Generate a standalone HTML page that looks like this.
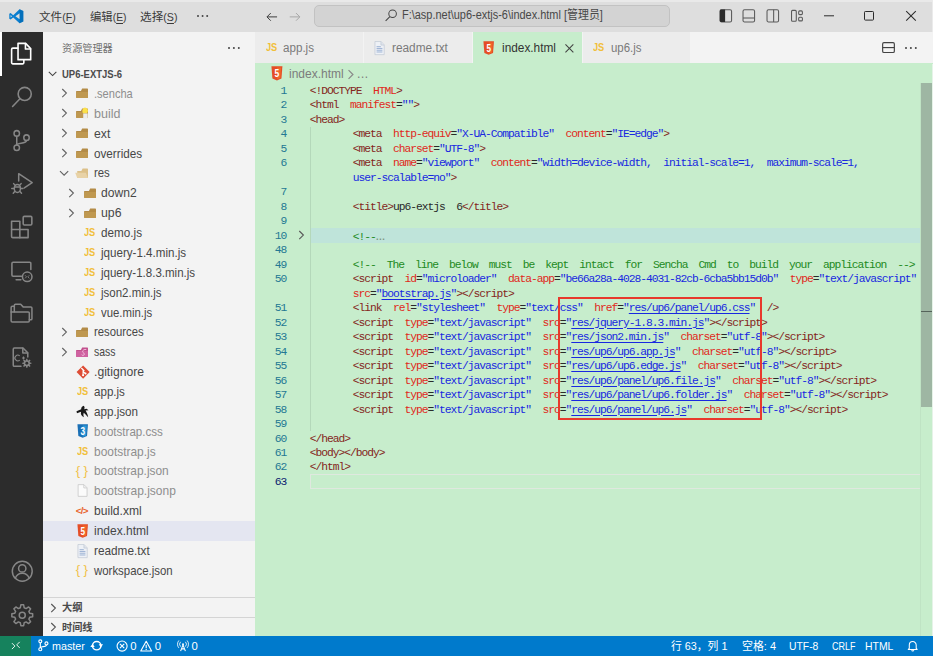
<!DOCTYPE html><html lang="zh-CN"><head><meta charset="utf-8"><title>index.html - up6-extjs-6</title><style>

html,body{margin:0;padding:0}
body{width:933px;height:656px;overflow:hidden;position:relative;background:#c7edcc;font-family:"Liberation Sans","Noto Sans CJK SC",sans-serif;font-size:11.7px;color:#3b3b3b}
.abs,.abs>*{position:absolute}
div,span,svg{position:absolute;white-space:pre}
.m{display:inline-block;transform-origin:0 50%}
#title{left:0;top:0;width:933px;height:32px;background:#dedede}
#titletop{left:0;top:0;width:933px;height:1.7px;background:#e9e9e9}
#act{left:0;top:32px;width:43px;height:605px;background:#2c2c2c}
#actind{left:0;top:32px;width:1.8px;height:43.6px;background:#ffffff}
#side{left:43px;top:32px;width:212px;height:605px;background:#f3f3f3}
#tabs{left:255px;top:32px;width:678px;height:31.3px;background:#f3f3f3}
.tab{top:32px;height:31.3px;background:#ececec}
#status{left:0;top:636.3px;width:933px;height:20px;background:#007acc;color:#fff}
#remote{left:0;top:636.3px;width:31px;height:20px;background:#16825d}
#search{left:314.2px;top:4.9px;width:355.6px;height:22px;box-sizing:border-box;border:1px solid #c2c2c2;border-radius:5px;background:#d3d3d3}
.code{font-family:"Liberation Mono","Noto Sans CJK SC",monospace;font-size:11.3px;letter-spacing:-1.03px;word-spacing:5.75px;line-height:14.48px;height:14.48px;color:#000}
.ln{font-family:"Liberation Mono","Noto Sans CJK SC",monospace;font-size:11.3px;letter-spacing:-1.03px;line-height:14.48px;color:#237893;width:30px;text-align:right;left:256.2px}
.t{color:#84261c}.a{color:#e02820}.v{color:#1828e0}.c{color:#228a22}.k{color:#2a2a2a}
.t,.a,.v,.c,.k,.u{position:static}
.u{text-decoration:underline;text-underline-offset:1.5px}
u{position:static;text-underline-offset:1.5px}
.st{top:636px;line-height:20px;height:20px;font-size:11.3px;color:#fff}

</style></head><body>
<div id="title"></div><div id="titletop"></div><div style="left:932px;top:0;width:1px;height:32px;background:#ebebeb"></div>
<svg style="left:8.80px;top:9.30px;overflow:visible" width="14.60" height="14.60" viewBox="0 0 100 100" ><path fill-rule="evenodd" fill="#0a7fd0" d="M72 2 L98 14 V86 L72 98 L29 58 L11 72 L2 67 V33 L11 28 L29 42 Z M73 29 L44 50 L73 71 Z M11 41 V59 L21 50 Z"/><path fill="#0065a9" d="M72 2 L98 14 V86 L72 98 V71 L73 71 V29 L72 29 Z" opacity=".55"/></svg>
<div style="left:38.6px;top:9.4px;font-size:11.6px;color:#3a3a3a;line-height:15px" ><span class="m" id="m1" style="transform:scaleX(1.0014);position:static;line-height:15px">文件<span class="k" style="font-size:10.6px;color:inherit">(<u>F</u>)</span></span></div>
<div style="left:89.5px;top:9.4px;font-size:11.6px;color:#3a3a3a;line-height:15px" ><span class="m" id="m2" style="transform:scaleX(0.9774);position:static;line-height:15px">编辑<span class="k" style="font-size:10.6px;color:inherit">(<u>E</u>)</span></span></div>
<div style="left:140.2px;top:9.4px;font-size:11.6px;color:#3a3a3a;line-height:15px" ><span class="m" id="m3" style="transform:scaleX(1.0042);position:static;line-height:15px">选择<span class="k" style="font-size:10.6px;color:inherit">(<u>S</u>)</span></span></div>
<svg style="left:196.50px;top:15.30px;overflow:visible" width="11.20" height="2.00" viewBox="0 0 11.2 2.0" ><circle cx="1.00" cy="1.00" r="1.0" fill="#444"/><circle cx="5.60" cy="1.00" r="1.0" fill="#444"/><circle cx="10.20" cy="1.00" r="1.0" fill="#444"/></svg>
<svg style="left:266.40px;top:10.60px;overflow:visible" width="11.80" height="11.80" viewBox="0 0 16 16" ><path d="M15 8H1.5M6.5 2.8L1.3 8l5.2 5.2" fill="none" stroke="#3c3c3c" stroke-width="1.35"/></svg>
<svg style="left:289.40px;top:10.60px;overflow:visible" width="11.80" height="11.80" viewBox="0 0 16 16" ><path d="M1 8h13.5M9.5 2.8L14.7 8l-5.2 5.2" fill="none" stroke="#a6a6a6" stroke-width="1.35"/></svg>
<div id="search"></div>
<svg style="left:385.40px;top:8.90px;overflow:visible" width="12.40" height="12.40" viewBox="0 0 16 16" ><circle cx="9.8" cy="6.2" r="4.9" fill="none" stroke="#444" stroke-width="1.3"/><path d="M6.3 9.7L0.8 15.2" stroke="#444" stroke-width="1.4"/></svg>
<div style="left:402px;top:8.3px;font-size:12.3px;color:#484848;line-height:15px"><span class="m" id="tt" style="transform:scaleX(0.8908);position:static;line-height:15px">F:\asp.net\up6-extjs-6\index.html [管理员]</span></div>
<svg style="left:718.70px;top:9.20px;overflow:visible" width="13.60" height="13.60" viewBox="0 0 16 16" ><rect x="1.2" y="0.8" width="13.6" height="14.4" rx="1.8" fill="none" stroke="#5a5a5a" stroke-width="1.25"/><path d="M1 2.200a1.600 1.600 0 0 1 1.600-1.600H7.200V15.400H2.600a1.600 1.600 0 0 1-1.600-1.600z" fill="#2b2b2b"/></svg>
<svg style="left:742.20px;top:9.20px;overflow:visible" width="13.60" height="13.60" viewBox="0 0 16 16" ><rect x="1.2" y="0.8" width="13.6" height="14.4" rx="1.8" fill="none" stroke="#5a5a5a" stroke-width="1.25"/><path d="M1.200 10.600H14.800" stroke="#5a5a5a" stroke-width="1.25"/></svg>
<svg style="left:765.60px;top:9.20px;overflow:visible" width="13.60" height="13.60" viewBox="0 0 16 16" ><rect x="1.2" y="0.8" width="13.6" height="14.4" rx="1.8" fill="none" stroke="#5a5a5a" stroke-width="1.25"/><path d="M9 0.800V15.200" stroke="#5a5a5a" stroke-width="1.25"/></svg>
<svg style="left:789.60px;top:9.20px;overflow:visible" width="13.60" height="13.60" viewBox="0 0 16 16" ><rect x="1.800" y="1.600" width="5.600" height="12.800" rx="1.200" fill="none" stroke="#5a5a5a" stroke-width="1.25"/><rect x="10.200" y="2.200" width="4.400" height="4.400" rx="1.200" fill="none" stroke="#5a5a5a" stroke-width="1.25"/><rect x="10.200" y="9.600" width="4.400" height="4.400" rx="1.200" fill="none" stroke="#5a5a5a" stroke-width="1.25"/></svg>
<svg style="left:823.60px;top:11.00px;overflow:visible" width="10.00" height="10.00" viewBox="0 0 10 10" ><path d="M0 4.8H10" stroke="#2b2b2b" stroke-width="1"/></svg>
<svg style="left:864.00px;top:11.00px;overflow:visible" width="10.00" height="10.00" viewBox="0 0 10 10" ><rect x="0.5" y="0.5" width="9" height="8.6" rx="0.8" fill="none" stroke="#2b2b2b" stroke-width="1"/></svg>
<svg style="left:905.50px;top:11.00px;overflow:visible" width="10.00" height="10.00" viewBox="0 0 10 10" ><path d="M0.2 0.2L9.8 9.6M9.8 0.2L0.2 9.6" stroke="#2b2b2b" stroke-width="1.05"/></svg>
<div id="act"></div><div id="actind"></div>
<svg style="left:9.26px;top:41.00px;overflow:visible" width="24.08" height="25.20" viewBox="0 0 24 24" preserveAspectRatio="none"><path d="M9 2.2h7.6l5 5V17.8H9z" fill="none" stroke="#ffffff" stroke-width="1.6" stroke-linejoin="round" stroke-linecap="round"/><path d="M16.4 2.4v5.2h5" fill="none" stroke="#ffffff" stroke-width="1.6" stroke-linejoin="round" stroke-linecap="round"/><path d="M8.8 6.8H3.8a1.2 1.2 0 0 0-1.2 1.2v12.6a1.2 1.2 0 0 0 1.2 1.2h9.8a1.2 1.2 0 0 0 1.2-1.2V18" fill="none" stroke="#ffffff" stroke-width="1.6" stroke-linejoin="round" stroke-linecap="round"/></svg>
<svg style="left:10.38px;top:85.28px;overflow:visible" width="23.85" height="23.85" viewBox="0 0 24 24" preserveAspectRatio="none"><circle cx="14.8" cy="9" r="6.6" fill="none" stroke="#868686" stroke-width="1.6" stroke-linejoin="round" stroke-linecap="round"/><path d="M10 13.8L2.6 21.6" fill="none" stroke="#868686" stroke-width="1.6" stroke-linejoin="round" stroke-linecap="round"/></svg>
<svg style="left:9.75px;top:129.11px;overflow:visible" width="22.50" height="23.18" viewBox="0 0 24 24" preserveAspectRatio="none"><circle cx="7.2" cy="4.6" r="2.9" fill="none" stroke="#868686" stroke-width="1.6" stroke-linejoin="round" stroke-linecap="round"/><circle cx="7.2" cy="19.400" r="2.9" fill="none" stroke="#868686" stroke-width="1.6" stroke-linejoin="round" stroke-linecap="round"/><circle cx="17.600" cy="9" r="2.9" fill="none" stroke="#868686" stroke-width="1.6" stroke-linejoin="round" stroke-linecap="round"/><path d="M7.2 7.5V16.5M17.600 11.900c0 3.800-10.400 1.800-10.400 4.600" fill="none" stroke="#868686" stroke-width="1.6" stroke-linejoin="round" stroke-linecap="round"/></svg>
<svg style="left:10.55px;top:172.05px;overflow:visible" width="22.50" height="22.50" viewBox="0 0 24 24" preserveAspectRatio="none"><path d="M8.2 9.5V1.8L22.6 11.4L14.2 17" fill="none" stroke="#868686" stroke-width="1.6" stroke-linejoin="round" stroke-linecap="round"/><ellipse cx="6.8" cy="17.6" rx="3.3" ry="4.2" fill="none" stroke="#868686" stroke-width="1.6" stroke-linejoin="round" stroke-linecap="round"/><path d="M4.4 14.2L2.8 12.4M9.2 14.2l1.6-1.8M3.5 17.6H0.8M10.1 17.6h2.7M4.2 20.6L2.4 22.6M9.4 20.6l1.8 2M3.8 16h6" fill="none" stroke="#868686" stroke-width="1.6" stroke-linejoin="round" stroke-linecap="round"/></svg>
<svg style="left:9.99px;top:215.29px;overflow:visible" width="23.62" height="23.62" viewBox="0 0 24 24" preserveAspectRatio="none"><path d="M1.6 6.4h8.4v8.4h8.4v8.2H2.8a1.2 1.2 0 0 1-1.2-1.2z" fill="none" stroke="#868686" stroke-width="1.6" stroke-linejoin="round" stroke-linecap="round"/><path d="M1.6 14.8h8.4V23" fill="none" stroke="#868686" stroke-width="1.6" stroke-linejoin="round" stroke-linecap="round"/><rect x="13.4" y="1.4" width="8.8" height="8.8" rx="1.2" fill="none" stroke="#868686" stroke-width="1.6" stroke-linejoin="round" stroke-linecap="round"/></svg>
<svg style="left:9.72px;top:259.72px;overflow:visible" width="22.95" height="22.95" viewBox="0 0 24 24" preserveAspectRatio="none"><path d="M12 17H3.2a1.2 1.2 0 0 1-1.2-1.2V3.6a1.2 1.2 0 0 1 1.2-1.2h17.4a1.2 1.2 0 0 1 1.2 1.2V10" fill="none" stroke="#868686" stroke-width="1.6" stroke-linejoin="round" stroke-linecap="round"/><path d="M6.4 20.6h5" fill="none" stroke="#868686" stroke-width="1.6" stroke-linejoin="round" stroke-linecap="round"/><circle cx="18" cy="17.6" r="5" fill="none" stroke="#868686" stroke-width="1.6" stroke-linejoin="round" stroke-linecap="round"/><path d="M15.8 16l1.5 1.6-1.5 1.6M20.2 16l-1.5 1.6 1.5 1.6" fill="none" stroke="#868686" stroke-width="0.9"/></svg>
<svg style="left:10.35px;top:302.45px;overflow:visible" width="22.50" height="22.50" viewBox="0 0 24 24" preserveAspectRatio="none"><path d="M4.6 10.4V3.600a1.200 1.200 0 0 1 1.200-1.200h5.600l2.600 2.800h8.200a1.200 1.200 0 0 1 1.200 1.200v11.400a1.200 1.200 0 0 1-1.200 1.200h-1.600" fill="none" stroke="#868686" stroke-width="1.6" stroke-linejoin="round" stroke-linecap="round"/><path d="M1.200 10.600V5.800a1.200 1.200 0 0 1 1.200-1.200h2" fill="none" stroke="#868686" stroke-width="1.6" stroke-linejoin="round" stroke-linecap="round"/><path d="M1.200 10.600h18.200a1.200 1.200 0 0 1 1.200 1.200v8.200a1.200 1.200 0 0 1-1.200 1.200H2.400a1.200 1.200 0 0 1-1.200-1.200z" fill="none" stroke="#868686" stroke-width="1.6" stroke-linejoin="round" stroke-linecap="round"/></svg>
<svg style="left:10.33px;top:346.05px;overflow:visible" width="22.95" height="22.50" viewBox="0 0 24 24" preserveAspectRatio="none"><path d="M11.5 21.6H4.6a1.2 1.2 0 0 1-1.2-1.2V3.4a1.2 1.2 0 0 1 1.2-1.2h9l5 5v4.6" fill="none" stroke="#868686" stroke-width="1.6" stroke-linejoin="round" stroke-linecap="round"/><path d="M13.4 2.4v5h5" fill="none" stroke="#868686" stroke-width="1.6" stroke-linejoin="round" stroke-linecap="round"/><path d="M10.2 10.6a3 3 0 1 0 0 4.4M12.6 12.8h3M14.1 11.3v3" fill="none" stroke="#868686" stroke-width="1.2"/><path d="M16.95 13.54L18.25 13.54L18.47 15.11L19.31 15.46L20.57 14.50L21.50 15.43L20.54 16.69L20.89 17.53L22.46 17.75L22.46 19.05L20.89 19.27L20.54 20.11L21.50 21.37L20.57 22.30L19.31 21.34L18.47 21.69L18.25 23.26L16.95 23.26L16.73 21.69L15.89 21.34L14.63 22.30L13.70 21.37L14.66 20.11L14.31 19.27L12.74 19.05L12.74 17.75L14.31 17.53L14.66 16.69L13.70 15.43L14.63 14.50L15.89 15.46L16.73 15.11Z" fill="#868686"/><circle cx="17.6" cy="18.4" r="1.5" fill="#2c2c2c"/></svg>
<svg style="left:10.55px;top:560.35px;overflow:visible" width="22.50" height="22.50" viewBox="0 0 24 24" preserveAspectRatio="none"><circle cx="12" cy="12" r="10.6" fill="none" stroke="#868686" stroke-width="1.6" stroke-linejoin="round" stroke-linecap="round"/><circle cx="12" cy="9" r="3.9" fill="none" stroke="#868686" stroke-width="1.6" stroke-linejoin="round" stroke-linecap="round"/><path d="M4.6 19.4c1.2-3.6 4-5.4 7.4-5.4s6.2 1.8 7.4 5.4" fill="none" stroke="#868686" stroke-width="1.6" stroke-linejoin="round" stroke-linecap="round"/></svg>
<svg style="left:10.55px;top:603.55px;overflow:visible" width="22.50" height="22.50" viewBox="0 0 24 24" preserveAspectRatio="none"><path d="M10.51 0.90L13.49 0.90L14.10 4.07L16.12 4.91L18.79 3.10L20.90 5.21L19.09 7.88L19.93 9.90L23.10 10.51L23.10 13.49L19.93 14.10L19.09 16.12L20.90 18.79L18.79 20.90L16.12 19.09L14.10 19.93L13.49 23.10L10.51 23.10L9.90 19.93L7.88 19.09L5.21 20.90L3.10 18.79L4.91 16.12L4.07 14.10L0.90 13.49L0.90 10.51L4.07 9.90L4.91 7.88L3.10 5.21L5.21 3.10L7.88 4.91L9.90 4.07Z" fill="none" stroke="#868686" stroke-width="1.6" stroke-linejoin="round" stroke-linecap="round"/><circle cx="12" cy="12" r="3.2" fill="none" stroke="#868686" stroke-width="1.6" stroke-linejoin="round" stroke-linecap="round"/></svg>
<div id="side"></div>
<div style="left:61.5px;top:41.5px;font-size:10.3px;color:#6f6f6f;line-height:13px"><span class="m" id="exp" style="transform:scaleX(0.9848);position:static;line-height:13px">资源管理器</span></div>
<svg style="left:228.30px;top:46.70px;overflow:visible" width="11.80" height="2.00" viewBox="0 0 11.8 2.0" ><circle cx="1.00" cy="1.00" r="1.0" fill="#424242"/><circle cx="5.90" cy="1.00" r="1.0" fill="#424242"/><circle cx="10.80" cy="1.00" r="1.0" fill="#424242"/></svg>
<svg style="left:47.00px;top:68.20px;overflow:visible" width="11.20" height="11.20" viewBox="0 0 16 16" ><path d="M2.6 5.4L8 10.8l5.4-5.4" fill="none" stroke="#424242" stroke-width="1.5"/></svg>
<div style="left:61.5px;top:67.5px;font-size:10.4px;font-weight:bold;color:#4b4b4b;line-height:13px"><span class="m" id="proj" style="transform:scaleX(0.9128);position:static;line-height:13px">UP6-EXTJS-6</span></div>
<svg style="left:58.20px;top:87.49px;overflow:visible" width="12.20" height="12.20" viewBox="0 0 16 16" ><path d="M5.6 2.6L11 8l-5.4 5.4" fill="none" stroke="#646464" stroke-width="1.5"/></svg>
<svg style="left:76.40px;top:87.44px;overflow:visible" width="12.30" height="12.30" viewBox="0 0 16 16" ><path d="M0.2 5.2H6.4L8 2h6.800a.8.8 0 0 1 .8.8v10.600a.8.8 0 0 1-.8.8H1a.8.8 0 0 1-.8-.8z" fill="#b38b47"/><path d="M0.2 6.400h15.400v7a.8.8 0 0 1-.8.8H1a.8.8 0 0 1-.8-.8z" fill="#bf9850"/></svg>
<div style="left:94.0px;top:84.95px;line-height:19.87px;height:19.87px;font-size:12.1px;color:#8e8e8e"><span class="m" id="tr0" style="transform:scaleX(0.9136);position:static;line-height:19.87px">.sencha</span></div>
<svg style="left:58.20px;top:107.36px;overflow:visible" width="12.20" height="12.20" viewBox="0 0 16 16" ><path d="M5.6 2.6L11 8l-5.4 5.4" fill="none" stroke="#646464" stroke-width="1.5"/></svg>
<svg style="left:76.40px;top:107.31px;overflow:visible" width="12.30" height="12.30" viewBox="0 0 16 16" ><path d="M0.2 5.2H6.4L8 2h6.800a.8.8 0 0 1 .8.8v10.600a.8.8 0 0 1-.8.8H1a.8.8 0 0 1-.8-.8z" fill="#b38b47"/><path d="M0.2 6.400h15.400v7a.8.8 0 0 1-.8.8H1a.8.8 0 0 1-.8-.8z" fill="#bf9850"/><path d="M8.600 3.200a3.600 3.600 0 0 1 7 1.200c0 2-1.200 3-2.200 3.800H9.600C8.400 7.200 7.800 5.200 8.600 3.200z" fill="#fbe04a"/><path d="M9.400 8.400h5.800v6.600H9.400z" fill="#ececec"/></svg>
<div style="left:94.0px;top:104.82px;line-height:19.87px;height:19.87px;font-size:12.1px;color:#8e8e8e"><span class="m" id="tr1" style="transform:scaleX(1.0328);position:static;line-height:19.87px">build</span></div>
<svg style="left:58.20px;top:127.23px;overflow:visible" width="12.20" height="12.20" viewBox="0 0 16 16" ><path d="M5.6 2.6L11 8l-5.4 5.4" fill="none" stroke="#646464" stroke-width="1.5"/></svg>
<svg style="left:76.40px;top:127.18px;overflow:visible" width="12.30" height="12.30" viewBox="0 0 16 16" ><path d="M0.2 5.2H6.4L8 2h6.800a.8.8 0 0 1 .8.8v10.600a.8.8 0 0 1-.8.8H1a.8.8 0 0 1-.8-.8z" fill="#b38b47"/><path d="M0.2 6.400h15.400v7a.8.8 0 0 1-.8.8H1a.8.8 0 0 1-.8-.8z" fill="#bf9850"/></svg>
<div style="left:94.0px;top:124.69px;line-height:19.87px;height:19.87px;font-size:12.1px;color:#474747"><span class="m" id="tr2" style="transform:scaleX(1.0099);position:static;line-height:19.87px">ext</span></div>
<svg style="left:58.20px;top:147.09px;overflow:visible" width="12.20" height="12.20" viewBox="0 0 16 16" ><path d="M5.6 2.6L11 8l-5.4 5.4" fill="none" stroke="#646464" stroke-width="1.5"/></svg>
<svg style="left:76.40px;top:147.04px;overflow:visible" width="12.30" height="12.30" viewBox="0 0 16 16" ><path d="M0.2 5.2H6.4L8 2h6.800a.8.8 0 0 1 .8.8v10.600a.8.8 0 0 1-.8.8H1a.8.8 0 0 1-.8-.8z" fill="#b38b47"/><path d="M0.2 6.400h15.400v7a.8.8 0 0 1-.8.8H1a.8.8 0 0 1-.8-.8z" fill="#bf9850"/></svg>
<div style="left:94.0px;top:144.56px;line-height:19.87px;height:19.87px;font-size:12.1px;color:#474747"><span class="m" id="tr3" style="transform:scaleX(0.9668);position:static;line-height:19.87px">overrides</span></div>
<svg style="left:58.20px;top:166.97px;overflow:visible" width="12.20" height="12.20" viewBox="0 0 16 16" ><path d="M2.6 5.4L8 10.8l5.4-5.4" fill="none" stroke="#646464" stroke-width="1.5"/></svg>
<svg style="left:76.40px;top:166.91px;overflow:visible" width="12.30" height="12.30" viewBox="0 0 16 16" ><path d="M1.600 5.200H7L8.600 2h6.200a.8.8 0 0 1 .8.8v11.400H1.600z" fill="#dcc089"/><path d="M-1 7.400h13.800l2.800 6.800H1.600z" fill="#e8d2a6"/></svg>
<div style="left:94.0px;top:164.43px;line-height:19.87px;height:19.87px;font-size:12.1px;color:#474747"><span class="m" id="tr4" style="transform:scaleX(0.9398);position:static;line-height:19.87px">res</span></div>
<svg style="left:65.30px;top:186.84px;overflow:visible" width="12.20" height="12.20" viewBox="0 0 16 16" ><path d="M5.6 2.6L11 8l-5.4 5.4" fill="none" stroke="#646464" stroke-width="1.5"/></svg>
<svg style="left:83.50px;top:186.78px;overflow:visible" width="12.30" height="12.30" viewBox="0 0 16 16" ><path d="M0.2 5.2H6.4L8 2h6.800a.8.8 0 0 1 .8.8v10.600a.8.8 0 0 1-.8.8H1a.8.8 0 0 1-.8-.8z" fill="#b38b47"/><path d="M0.2 6.400h15.400v7a.8.8 0 0 1-.8.8H1a.8.8 0 0 1-.8-.8z" fill="#bf9850"/></svg>
<div style="left:101.1px;top:184.30px;line-height:19.87px;height:19.87px;font-size:12.1px;color:#474747"><span class="m" id="tr5" style="transform:scaleX(0.9989);position:static;line-height:19.87px">down2</span></div>
<svg style="left:65.30px;top:206.71px;overflow:visible" width="12.20" height="12.20" viewBox="0 0 16 16" ><path d="M5.6 2.6L11 8l-5.4 5.4" fill="none" stroke="#646464" stroke-width="1.5"/></svg>
<svg style="left:83.50px;top:206.66px;overflow:visible" width="12.30" height="12.30" viewBox="0 0 16 16" ><path d="M0.2 5.2H6.4L8 2h6.800a.8.8 0 0 1 .8.8v10.600a.8.8 0 0 1-.8.8H1a.8.8 0 0 1-.8-.8z" fill="#b38b47"/><path d="M0.2 6.400h15.400v7a.8.8 0 0 1-.8.8H1a.8.8 0 0 1-.8-.8z" fill="#bf9850"/></svg>
<div style="left:101.1px;top:204.17px;line-height:19.87px;height:19.87px;font-size:12.1px;color:#474747"><span class="m" id="tr6" style="transform:scaleX(1.0155);position:static;line-height:19.87px">up6</span></div>
<span style="left:83.80px;top:226.18px;font-family:'Liberation Sans',sans-serif;font-weight:bold;font-size:11.00px;line-height:13.00px;letter-spacing:-0.2px;color:#f1bf3a;transform:scaleX(0.84);transform-origin:0 50%">JS</span>
<div style="left:101.1px;top:224.04px;line-height:19.87px;height:19.87px;font-size:12.1px;color:#474747"><span class="m" id="tr7" style="transform:scaleX(0.9679);position:static;line-height:19.87px">demo.js</span></div>
<span style="left:83.80px;top:246.05px;font-family:'Liberation Sans',sans-serif;font-weight:bold;font-size:11.00px;line-height:13.00px;letter-spacing:-0.2px;color:#f1bf3a;transform:scaleX(0.84);transform-origin:0 50%">JS</span>
<div style="left:101.1px;top:243.91px;line-height:19.87px;height:19.87px;font-size:12.1px;color:#474747"><span class="m" id="tr8" style="transform:scaleX(0.9590);position:static;line-height:19.87px">jquery-1.4.min.js</span></div>
<span style="left:83.80px;top:265.92px;font-family:'Liberation Sans',sans-serif;font-weight:bold;font-size:11.00px;line-height:13.00px;letter-spacing:-0.2px;color:#f1bf3a;transform:scaleX(0.84);transform-origin:0 50%">JS</span>
<div style="left:101.1px;top:263.78px;line-height:19.87px;height:19.87px;font-size:12.1px;color:#474747"><span class="m" id="tr9" style="transform:scaleX(0.9523);position:static;line-height:19.87px">jquery-1.8.3.min.js</span></div>
<span style="left:83.80px;top:285.79px;font-family:'Liberation Sans',sans-serif;font-weight:bold;font-size:11.00px;line-height:13.00px;letter-spacing:-0.2px;color:#f1bf3a;transform:scaleX(0.84);transform-origin:0 50%">JS</span>
<div style="left:101.1px;top:283.65px;line-height:19.87px;height:19.87px;font-size:12.1px;color:#474747"><span class="m" id="tr10" style="transform:scaleX(0.9490);position:static;line-height:19.87px">json2.min.js</span></div>
<span style="left:83.80px;top:305.66px;font-family:'Liberation Sans',sans-serif;font-weight:bold;font-size:11.00px;line-height:13.00px;letter-spacing:-0.2px;color:#f1bf3a;transform:scaleX(0.84);transform-origin:0 50%">JS</span>
<div style="left:101.1px;top:303.52px;line-height:19.87px;height:19.87px;font-size:12.1px;color:#474747"><span class="m" id="tr11" style="transform:scaleX(0.9384);position:static;line-height:19.87px">vue.min.js</span></div>
<svg style="left:58.20px;top:325.93px;overflow:visible" width="12.20" height="12.20" viewBox="0 0 16 16" ><path d="M5.6 2.6L11 8l-5.4 5.4" fill="none" stroke="#646464" stroke-width="1.5"/></svg>
<svg style="left:76.40px;top:325.88px;overflow:visible" width="12.30" height="12.30" viewBox="0 0 16 16" ><path d="M0.2 5.2H6.4L8 2h6.800a.8.8 0 0 1 .8.8v10.600a.8.8 0 0 1-.8.8H1a.8.8 0 0 1-.8-.8z" fill="#b38b47"/><path d="M0.2 6.400h15.400v7a.8.8 0 0 1-.8.8H1a.8.8 0 0 1-.8-.8z" fill="#bf9850"/></svg>
<div style="left:94.0px;top:323.39px;line-height:19.87px;height:19.87px;font-size:12.1px;color:#474747"><span class="m" id="tr12" style="transform:scaleX(0.9358);position:static;line-height:19.87px">resources</span></div>
<svg style="left:58.20px;top:345.80px;overflow:visible" width="12.20" height="12.20" viewBox="0 0 16 16" ><path d="M5.6 2.6L11 8l-5.4 5.4" fill="none" stroke="#646464" stroke-width="1.5"/></svg>
<svg style="left:76.40px;top:345.75px;overflow:visible" width="12.30" height="12.30" viewBox="0 0 16 16" ><path d="M0.2 5.2H6.4L8 2h6.800a.8.8 0 0 1 .8.8v10.600a.8.8 0 0 1-.8.8H1a.8.8 0 0 1-.8-.8z" fill="#c2508d"/><path d="M0.2 6.400h15.400v7a.8.8 0 0 1-.8.8H1a.8.8 0 0 1-.8-.8z" fill="#cf62a0"/><path d="M13.400 4.600c-2.200-.8-5.200 1-4.800 2.800.4 1.600 2.600 2 2.200 3.600-.4 1.400-2.600 1.600-3.400.4" fill="none" stroke="#f1bddb" stroke-width="1.300"/></svg>
<div style="left:94.0px;top:343.26px;line-height:19.87px;height:19.87px;font-size:12.1px;color:#474747"><span class="m" id="tr13" style="transform:scaleX(0.8643);position:static;line-height:19.87px">sass</span></div>
<svg style="left:75.50px;top:364.67px;overflow:visible" width="14.20" height="14.20" viewBox="0 0 16 16" ><path d="M8 0.6L15.4 8L8 15.4L0.6 8z" fill="#dd4c35"/><path d="M6 3.4l3.4 3.4M8 5.4v6.2M8.2 7.6l2.6 2.2" stroke="#fff" stroke-width="1.3" fill="none"/><circle cx="8" cy="11.6" r="1.2" fill="#fff"/><circle cx="10.8" cy="9.6" r="1.1" fill="#fff"/></svg>
<div style="left:94.0px;top:363.13px;line-height:19.87px;height:19.87px;font-size:12.1px;color:#474747"><span class="m" id="tr14" style="transform:scaleX(1.0047);position:static;line-height:19.87px">.gitignore</span></div>
<span style="left:76.70px;top:385.14px;font-family:'Liberation Sans',sans-serif;font-weight:bold;font-size:11.00px;line-height:13.00px;letter-spacing:-0.2px;color:#f1bf3a;transform:scaleX(0.84);transform-origin:0 50%">JS</span>
<div style="left:94.0px;top:383.00px;line-height:19.87px;height:19.87px;font-size:12.1px;color:#474747"><span class="m" id="tr15" style="transform:scaleX(0.9572);position:static;line-height:19.87px">app.js</span></div>
<svg style="left:76.40px;top:405.01px;overflow:visible" width="13.00" height="13.00" viewBox="0 0 16 16" ><path d="M9.6 0.8c1.2 1.6 1.4 3 .2 4.4l3.2-.6 2.4 2-3.6.2c1 2 2.6 4.4 3.2 8.2-2.2-2-3.6-4.400-5.400-5.600-.8 2-.6 3.800.4 5.800C6.600 13.600 5.400 11 6.200 8.200L1.200 10l-.6-2.200L6.400 5.200C6.200 3 7.600 1.600 9.600.8z" fill="#1a1a1a"/></svg>
<div style="left:94.0px;top:402.87px;line-height:19.87px;height:19.87px;font-size:12.1px;color:#474747"><span class="m" id="tr16" style="transform:scaleX(0.9643);position:static;line-height:19.87px">app.json</span></div>
<svg style="left:76.50px;top:424.28px;overflow:visible" width="11.40" height="14.20" viewBox="0 0 16 16" preserveAspectRatio="none"><path d="M0.600 0.400h14.800l-1.300 13.200L8 15.600 1.900 13.600z" fill="#1a6fb5"/><path d="M8 1.600v12.800l4.700-1.500 1-11.300z" fill="#2a9ad8"/><text x="8" y="12.2" text-anchor="middle" font-family="Liberation Sans,sans-serif" font-weight="bold" font-size="11.5" letter-spacing="0" fill="#fff">3</text></svg>
<div style="left:94.0px;top:422.74px;line-height:19.87px;height:19.87px;font-size:12.1px;color:#8e8e8e"><span class="m" id="tr17" style="transform:scaleX(0.9578);position:static;line-height:19.87px">bootstrap.css</span></div>
<span style="left:76.70px;top:444.75px;font-family:'Liberation Sans',sans-serif;font-weight:bold;font-size:11.00px;line-height:13.00px;letter-spacing:-0.2px;color:#f1bf3a;transform:scaleX(0.84);transform-origin:0 50%">JS</span>
<div style="left:94.0px;top:442.61px;line-height:19.87px;height:19.87px;font-size:12.1px;color:#8e8e8e"><span class="m" id="tr18" style="transform:scaleX(0.9851);position:static;line-height:19.87px">bootstrap.js</span></div>
<span style="left:75.80px;top:463.62px;font-family:'Liberation Sans',sans-serif;font-size:13.40px;line-height:13.00px;word-spacing:-0.6px;color:#f1c24a">{ }</span>
<div style="left:94.0px;top:462.48px;line-height:19.87px;height:19.87px;font-size:12.1px;color:#8e8e8e"><span class="m" id="tr19" style="transform:scaleX(0.9831);position:static;line-height:19.87px">bootstrap.json</span></div>
<svg style="left:76.40px;top:484.49px;overflow:visible" width="13.00" height="13.00" viewBox="0 0 16 16" ><path d="M2.600 0.800h7.200l3.800 3.800v10.600H2.600z" fill="#fbfbfb" stroke="#c8c8c8" stroke-width="1"/><path d="M9.600 1v3.800h3.800" fill="none" stroke="#c8c8c8" stroke-width="1"/></svg>
<div style="left:94.0px;top:482.35px;line-height:19.87px;height:19.87px;font-size:12.1px;color:#8e8e8e"><span class="m" id="tr20" style="transform:scaleX(0.9891);position:static;line-height:19.87px">bootstrap.jsonp</span></div>
<span style="left:75.80px;top:504.36px;font-family:'Liberation Sans',sans-serif;font-weight:bold;font-size:9.80px;line-height:13.00px;letter-spacing:-0.7px;color:#e8642c">&lt;/&gt;</span>
<div style="left:94.0px;top:502.22px;line-height:19.87px;height:19.87px;font-size:12.1px;color:#474747"><span class="m" id="tr21" style="transform:scaleX(0.9993);position:static;line-height:19.87px">build.xml</span></div>
<div style="left:43px;top:521.19px;width:212px;height:19.87px;background:#e4e6f1"></div>
<svg style="left:76.50px;top:523.62px;overflow:visible" width="11.40" height="14.20" viewBox="0 0 16 16" preserveAspectRatio="none"><path d="M0.600 0.400h14.800l-1.300 13.200L8 15.600 1.900 13.600z" fill="#e44d26"/><path d="M8 1.600v12.800l4.700-1.500 1-11.300z" fill="#f16529"/><text x="8" y="12.2" text-anchor="middle" font-family="Liberation Sans,sans-serif" font-weight="bold" font-size="11.5" letter-spacing="0" fill="#fff">5</text></svg>
<div style="left:94.0px;top:522.09px;line-height:19.87px;height:19.87px;font-size:12.1px;color:#474747"><span class="m" id="tr22" style="transform:scaleX(0.9923);position:static;line-height:19.87px">index.html</span></div>
<svg style="left:76.40px;top:543.50px;overflow:visible" width="13.00" height="14.20" viewBox="0 0 16 16" preserveAspectRatio="none"><path d="M2.400 0.600h7.600l3.800 3.800v11H2.400z" fill="#eef1f6" stroke="#c3cad6" stroke-width="0.9"/><path d="M9.800 0.800v3.800h3.800" fill="#dfe4ec" stroke="#c3cad6" stroke-width="0.9"/><path d="M4.400 6.400h5.200M4.400 8.400h7.200M4.400 10.400h7.200M4.400 12.400h7.200" stroke="#8fa8cf" stroke-width="1"/></svg>
<div style="left:94.0px;top:541.96px;line-height:19.87px;height:19.87px;font-size:12.1px;color:#474747"><span class="m" id="tr23" style="transform:scaleX(0.9748);position:static;line-height:19.87px">readme.txt</span></div>
<span style="left:75.80px;top:562.96px;font-family:'Liberation Sans',sans-serif;font-size:13.40px;line-height:13.00px;word-spacing:-0.6px;color:#f1c24a">{ }</span>
<div style="left:94.0px;top:561.83px;line-height:19.87px;height:19.87px;font-size:12.1px;color:#474747"><span class="m" id="tr24" style="transform:scaleX(0.9441);position:static;line-height:19.87px">workspace.json</span></div>
<div style="left:43px;top:597px;width:212px;height:1px;background:#d4d4d4"></div>
<div style="left:43px;top:617px;width:212px;height:1px;background:#d4d4d4"></div>
<svg style="left:46.60px;top:601.60px;overflow:visible" width="12.20" height="12.20" viewBox="0 0 16 16" ><path d="M5.6 2.6L11 8l-5.4 5.4" fill="none" stroke="#555" stroke-width="1.5"/></svg>
<div style="left:61.5px;top:601px;font-size:10.3px;font-weight:bold;color:#4a4a4a;line-height:14px"><span class="m" id="s1" style="transform:scaleX(0.9954);position:static;line-height:14px">大纲</span></div>
<svg style="left:46.60px;top:621.20px;overflow:visible" width="12.20" height="12.20" viewBox="0 0 16 16" ><path d="M5.6 2.6L11 8l-5.4 5.4" fill="none" stroke="#555" stroke-width="1.5"/></svg>
<div style="left:61.5px;top:620.5px;font-size:10.3px;font-weight:bold;color:#4a4a4a;line-height:14px"><span class="m" id="s2" style="transform:scaleX(0.9874);position:static;line-height:14px">时间线</span></div>
<div id="tabs"></div>
<div class="tab" style="left:255px;width:108px"></div>
<div class="tab" style="left:363.8px;width:108.4px"></div>
<div class="tab" style="left:473px;width:109px;background:#c7edcc"></div>
<div class="tab" style="left:582.8px;width:107px"></div>
<span style="left:265.80px;top:41.00px;font-family:'Liberation Sans',sans-serif;font-weight:bold;font-size:11.00px;line-height:13.00px;letter-spacing:-0.2px;color:#f1bf3a;transform:scaleX(0.84);transform-origin:0 50%">JS</span>
<div style="left:283.4px;top:39.5px;font-size:12px;color:#7a7a7a;line-height:16px"><span class="m" id="tb1" style="transform:scaleX(0.9678);position:static;line-height:16px">app.js</span></div>
<svg style="left:372.60px;top:40.70px;overflow:visible" width="13.00" height="14.20" viewBox="0 0 16 16" preserveAspectRatio="none"><path d="M2.400 0.600h7.600l3.800 3.800v11H2.400z" fill="#eef1f6" stroke="#c3cad6" stroke-width="0.9"/><path d="M9.800 0.800v3.800h3.800" fill="#dfe4ec" stroke="#c3cad6" stroke-width="0.9"/><path d="M4.400 6.400h5.200M4.400 8.400h7.200M4.400 10.400h7.200M4.400 12.400h7.200" stroke="#8fa8cf" stroke-width="1"/></svg>
<div style="left:391.8px;top:39.5px;font-size:12px;color:#7a7a7a;line-height:16px"><span class="m" id="tb2" style="transform:scaleX(0.9858);position:static;line-height:16px">readme.txt</span></div>
<svg style="left:483.10px;top:40.70px;overflow:visible" width="11.40" height="14.20" viewBox="0 0 16 16" preserveAspectRatio="none"><path d="M0.600 0.400h14.800l-1.300 13.200L8 15.600 1.900 13.600z" fill="#e44d26"/><path d="M8 1.600v12.800l4.700-1.500 1-11.300z" fill="#f16529"/><text x="8" y="12.2" text-anchor="middle" font-family="Liberation Sans,sans-serif" font-weight="bold" font-size="11.5" letter-spacing="0" fill="#fff">5</text></svg>
<div style="left:502.4px;top:39.5px;font-size:12px;color:#333333;line-height:16px"><span class="m" id="tb3" style="transform:scaleX(0.9871);position:static;line-height:16px">index.html</span></div>
<svg style="left:564.50px;top:43.50px;overflow:visible" width="8.80" height="8.80" viewBox="0 0 10 10" ><path d="M0.5 0.5L9.5 9.5M9.5 0.5L0.5 9.5" stroke="#424242" stroke-width="1.2"/></svg>
<span style="left:592.80px;top:41.00px;font-family:'Liberation Sans',sans-serif;font-weight:bold;font-size:11.00px;line-height:13.00px;letter-spacing:-0.2px;color:#f1bf3a;transform:scaleX(0.84);transform-origin:0 50%">JS</span>
<div style="left:611.2px;top:39.5px;font-size:12px;color:#7a7a7a;line-height:16px"><span class="m" id="tb4" style="transform:scaleX(0.9522);position:static;line-height:16px">up6.js</span></div>
<svg style="left:881.50px;top:42.00px;overflow:visible" width="13.00" height="11.18" viewBox="0 0 14 12" ><rect x="0.7" y="0.7" width="12.6" height="10.6" rx="1.4" fill="none" stroke="#424242" stroke-width="1.25"/><path d="M0.7 6H13.3" stroke="#424242" stroke-width="1.25"/></svg>
<svg style="left:905.30px;top:46.60px;overflow:visible" width="11.80" height="2.00" viewBox="0 0 11.8 2.0" ><circle cx="1.00" cy="1.00" r="1.0" fill="#424242"/><circle cx="5.90" cy="1.00" r="1.0" fill="#424242"/><circle cx="10.80" cy="1.00" r="1.0" fill="#424242"/></svg>
<svg style="left:270.50px;top:66.00px;overflow:visible" width="11.86" height="14.77" viewBox="0 0 16 16" preserveAspectRatio="none"><path d="M0.600 0.400h14.800l-1.300 13.200L8 15.600 1.900 13.600z" fill="#e44d26"/><path d="M8 1.600v12.800l4.700-1.500 1-11.300z" fill="#f16529"/><text x="8" y="12.2" text-anchor="middle" font-family="Liberation Sans,sans-serif" font-weight="bold" font-size="11.5" letter-spacing="0" fill="#fff">5</text></svg>
<div style="left:289px;top:67.4px;font-size:12.1px;color:#7c7c7c;line-height:15px"><span class="m" id="bc" style="transform:scaleX(0.9923);position:static;line-height:15px">index.html</span></div>
<svg style="left:344.20px;top:67.80px;overflow:visible" width="13.00" height="13.00" viewBox="0 0 16 16" ><path d="M5.6 2.6L11 8l-5.4 5.4" fill="none" stroke="#8a8a8a" stroke-width="1.5"/></svg>
<div style="left:356.6px;top:67.4px;font-size:12.1px;color:#7c7c7c;line-height:15px;letter-spacing:-0.8px">…</div>
<div style="left:310px;top:228.20px;width:610px;height:14.48px;background:#bfe4da"></div>
<div style="left:310px;top:474.36px;width:610px;height:14.48px;box-sizing:border-box;border-top:1.4px solid #dfe8df;border-bottom:1.4px solid #dfe8df;border-left:1.4px solid #dfe8df"></div>
<div style="left:310px;top:126.84px;width:1px;height:304.08px;background:#b4d8ba"></div>
<div class="ln" style="top:84.00px;color:#237893">1</div>
<div class="code" id="c0" style="left:309.8px;top:84.00px"><span class="t">&lt;!DOCTYPE</span> <span class="a">HTML</span><span class="t">&gt;</span></div>
<div class="ln" style="top:98.48px;color:#237893">2</div>
<div class="code" id="c1" style="left:309.8px;top:98.48px"><span class="t">&lt;html</span> <span class="a">manifest</span><span class="k">=</span><span class="v">&quot;&quot;</span><span class="t">&gt;</span></div>
<div class="ln" style="top:112.96px;color:#237893">3</div>
<div class="code" id="c2" style="left:309.8px;top:112.96px"><span class="t">&lt;head&gt;</span></div>
<div class="ln" style="top:127.44px;color:#237893">4</div>
<div class="code" id="c3" style="left:352.8px;top:127.44px"><span class="t">&lt;meta</span> <span class="a">http-equiv</span><span class="k">=</span><span class="v">&quot;X-UA-Compatible&quot;</span> <span class="a">content</span><span class="k">=</span><span class="v">&quot;IE=edge&quot;</span><span class="t">&gt;</span></div>
<div class="ln" style="top:141.92px;color:#237893">5</div>
<div class="code" id="c4" style="left:352.8px;top:141.92px"><span class="t">&lt;meta</span> <span class="a">charset</span><span class="k">=</span><span class="v">&quot;UTF-8&quot;</span><span class="t">&gt;</span></div>
<div class="ln" style="top:156.40px;color:#237893">6</div>
<div class="code" id="c5" style="left:352.8px;top:156.40px"><span class="t">&lt;meta</span> <span class="a">name</span><span class="k">=</span><span class="v">&quot;viewport&quot;</span> <span class="a">content</span><span class="k">=</span><span class="v">&quot;width=device-width, initial-scale=1, maximum-scale=1,</span></div>
<div class="code" id="c6" style="left:352.8px;top:170.88px"><span class="v">user-scalable=no&quot;</span><span class="t">&gt;</span></div>
<div class="ln" style="top:185.36px;color:#237893">7</div>
<div class="ln" style="top:199.84px;color:#237893">8</div>
<div class="code" id="c8" style="left:352.8px;top:199.84px"><span class="t">&lt;title&gt;</span><span class="k">up6-extjs 6</span><span class="t">&lt;/title&gt;</span></div>
<div class="ln" style="top:214.32px;color:#237893">9</div>
<div class="ln" style="top:228.80px;color:#237893">10</div>
<div class="code" id="c10" style="left:352.8px;top:228.80px"><span class="c">&lt;!--</span><span class="k" style="color:#7f9684;font-size:15.5px;letter-spacing:0">…</span></div>
<div class="ln" style="top:243.28px;color:#237893">48</div>
<div class="ln" style="top:257.76px;color:#237893">49</div>
<div class="code" id="c12" style="left:352.8px;top:257.76px;word-spacing:5.25px"><span class="c">&lt;!-- The line below must be kept intact for Sencha Cmd to build your application --&gt;</span></div>
<div class="ln" style="top:272.24px;color:#237893">50</div>
<div class="code" id="c13" style="left:352.8px;top:272.24px"><span class="t">&lt;script</span> <span class="a">id</span><span class="k">=</span><span class="v">&quot;microloader&quot;</span> <span class="a">data-app</span><span class="k">=</span><span class="v">&quot;be66a28a-4028-4031-82cb-6cba5bb15d0b&quot;</span> <span class="a">type</span><span class="k">=</span><span class="v">&quot;text/javascript&quot;</span></div>
<div class="code" id="c14" style="left:352.8px;top:286.72px"><span class="a">src</span><span class="k">=</span><span class="v">"<span class="u">bootstrap.js</span>"</span><span class="t">&gt;&lt;/script&gt;</span></div>
<div class="ln" style="top:301.20px;color:#237893">51</div>
<div class="code" id="c15" style="left:352.8px;top:301.20px"><span class="t">&lt;link</span> <span class="a">rel</span><span class="k">=</span><span class="v">&quot;stylesheet&quot;</span> <span class="a">type</span><span class="k">=</span><span class="v">&quot;text/css&quot;</span> <span class="a">href</span><span class="k">=</span><span class="v">"<span class="u">res/up6/panel/up6.css</span>"</span> <span class="t">/&gt;</span></div>
<div class="ln" style="top:315.68px;color:#237893">52</div>
<div class="code" id="c16" style="left:352.8px;top:315.68px"><span class="t">&lt;script</span> <span class="a">type</span><span class="k">=</span><span class="v">&quot;text/javascript&quot;</span> <span class="a">src</span><span class="k">=</span><span class="v">"<span class="u">res/jquery-1.8.3.min.js</span>"</span><span class="t">&gt;&lt;/script&gt;</span></div>
<div class="ln" style="top:330.16px;color:#237893">53</div>
<div class="code" id="c17" style="left:352.8px;top:330.16px"><span class="t">&lt;script</span> <span class="a">type</span><span class="k">=</span><span class="v">&quot;text/javascript&quot;</span> <span class="a">src</span><span class="k">=</span><span class="v">"<span class="u">res/json2.min.js</span>"</span> <span class="a">charset</span><span class="k">=</span><span class="v">&quot;utf-8&quot;</span><span class="t">&gt;&lt;/script&gt;</span></div>
<div class="ln" style="top:344.64px;color:#237893">54</div>
<div class="code" id="c18" style="left:352.8px;top:344.64px"><span class="t">&lt;script</span> <span class="a">type</span><span class="k">=</span><span class="v">&quot;text/javascript&quot;</span> <span class="a">src</span><span class="k">=</span><span class="v">"<span class="u">res/up6/up6.app.js</span>"</span> <span class="a">charset</span><span class="k">=</span><span class="v">&quot;utf-8&quot;</span><span class="t">&gt;&lt;/script&gt;</span></div>
<div class="ln" style="top:359.12px;color:#237893">55</div>
<div class="code" id="c19" style="left:352.8px;top:359.12px"><span class="t">&lt;script</span> <span class="a">type</span><span class="k">=</span><span class="v">&quot;text/javascript&quot;</span> <span class="a">src</span><span class="k">=</span><span class="v">"<span class="u">res/up6/up6.edge.js</span>"</span> <span class="a">charset</span><span class="k">=</span><span class="v">&quot;utf-8&quot;</span><span class="t">&gt;&lt;/script&gt;</span></div>
<div class="ln" style="top:373.60px;color:#237893">56</div>
<div class="code" id="c20" style="left:352.8px;top:373.60px"><span class="t">&lt;script</span> <span class="a">type</span><span class="k">=</span><span class="v">&quot;text/javascript&quot;</span> <span class="a">src</span><span class="k">=</span><span class="v">"<span class="u">res/up6/panel/up6.file.js</span>"</span> <span class="a">charset</span><span class="k">=</span><span class="v">&quot;utf-8&quot;</span><span class="t">&gt;&lt;/script&gt;</span></div>
<div class="ln" style="top:388.08px;color:#237893">57</div>
<div class="code" id="c21" style="left:352.8px;top:388.08px"><span class="t">&lt;script</span> <span class="a">type</span><span class="k">=</span><span class="v">&quot;text/javascript&quot;</span> <span class="a">src</span><span class="k">=</span><span class="v">"<span class="u">res/up6/panel/up6.folder.js</span>"</span> <span class="a">charset</span><span class="k">=</span><span class="v">&quot;utf-8&quot;</span><span class="t">&gt;&lt;/script&gt;</span></div>
<div class="ln" style="top:402.56px;color:#237893">58</div>
<div class="code" id="c22" style="left:352.8px;top:402.56px"><span class="t">&lt;script</span> <span class="a">type</span><span class="k">=</span><span class="v">&quot;text/javascript&quot;</span> <span class="a">src</span><span class="k">=</span><span class="v">"<span class="u">res/up6/panel/up6.js</span>"</span> <span class="a">charset</span><span class="k">=</span><span class="v">&quot;utf-8&quot;</span><span class="t">&gt;&lt;/script&gt;</span></div>
<div class="ln" style="top:417.04px;color:#237893">59</div>
<div class="ln" style="top:431.52px;color:#237893">60</div>
<div class="code" id="c24" style="left:309.8px;top:431.52px"><span class="t">&lt;/head&gt;</span></div>
<div class="ln" style="top:446.00px;color:#237893">61</div>
<div class="code" id="c25" style="left:309.8px;top:446.00px"><span class="t">&lt;body&gt;&lt;/body&gt;</span></div>
<div class="ln" style="top:460.48px;color:#237893">62</div>
<div class="code" id="c26" style="left:309.8px;top:460.48px"><span class="t">&lt;/html&gt;</span></div>
<div class="ln" style="top:474.96px;color:#0b216f">63</div>
<svg style="left:294.60px;top:229.40px;overflow:visible" width="12.20" height="12.20" viewBox="0 0 16 16" ><path d="M5.6 2.6L11 8l-5.4 5.4" fill="none" stroke="#5a5a5a" stroke-width="1.5"/></svg>
<div style="left:920px;top:83.4px;width:12px;height:323.6px;background:#9eb6a3"></div>
<div style="left:920px;top:310.8px;width:13px;height:1.5px;background:#55635a"></div>
<div style="left:932px;top:63.500px;width:1px;height:573px;background:#e6f3e8"></div>
<div style="left:920px;top:83px;width:1px;height:553px;background:#bfe3c4"></div>
<div style="left:558px;top:297px;width:204px;height:123px;box-sizing:border-box;border:2px solid #e8392c"></div>
<div id="status"></div><div id="remote"></div>
<svg style="left:10.60px;top:641.20px;overflow:visible" width="9.60" height="9.60" viewBox="0 0 16 16" ><path d="M1.500 3.500L6.500 8.500L1.500 13.500M14.500 1.500L9.500 6.500L14.500 11.500" fill="none" stroke="#ffffff" stroke-width="1.5"/></svg>
<svg style="left:36.60px;top:639.40px;overflow:visible" width="12.60" height="12.60" viewBox="0 0 16 16" ><circle cx="4.200" cy="3" r="1.900" fill="none" stroke="#ffffff" stroke-width="1.45"/><circle cx="4.200" cy="13" r="1.900" fill="none" stroke="#ffffff" stroke-width="1.45"/><circle cx="12" cy="5.600" r="1.900" fill="none" stroke="#ffffff" stroke-width="1.45"/><path d="M4.200 4.900v6.200M12 7.500c0 3.200-7.800 1.400-7.800 3.800" fill="none" stroke="#ffffff" stroke-width="1.45"/></svg>
<div class="st" style="left:52px"><span class="m" id="sb1" style="transform:scaleX(0.9499);position:static;line-height:20px">master</span></div>
<svg style="left:90.20px;top:639.40px;overflow:visible" width="13.40" height="13.40" viewBox="0 0 16 16" ><circle cx="8" cy="8" r="5" fill="none" stroke="#ffffff" stroke-width="1.700"/><path d="M10.400 6.400h5.200L13 10.200zM0.400 9.600h5.200L3 5.800z" fill="#ffffff"/></svg>
<svg style="left:115.60px;top:640.00px;overflow:visible" width="12.20" height="12.20" viewBox="0 0 16 16" ><circle cx="8" cy="8" r="6.600" fill="none" stroke="#ffffff" stroke-width="1.45"/><path d="M5.200 5.200l5.600 5.600M10.800 5.200l-5.600 5.600" fill="none" stroke="#ffffff" stroke-width="1.45"/></svg>
<div class="st" style="left:130.2px"><span class="m" id="sb2" style="transform:scaleX(1.0000);position:static;line-height:20px">0</span></div>
<svg style="left:140.00px;top:640.00px;overflow:visible" width="12.40" height="12.40" viewBox="0 0 16 16" ><path d="M8 1.600L15 14.200H1z" fill="none" stroke="#ffffff" stroke-width="1.45" stroke-linejoin="round"/><path d="M8 6v4.400M8 11.400v1.400" fill="none" stroke="#ffffff" stroke-width="1.45"/></svg>
<div class="st" style="left:154.8px"><span class="m" id="sb3" style="transform:scaleX(1.0000);position:static;line-height:20px">0</span></div>
<svg style="left:177.30px;top:640.00px;overflow:visible" width="12.00" height="12.00" viewBox="0 0 16 16" ><path d="M8 6.500L4.800 14.800M8 6.500l3.200 8.300M6 11.800h4" fill="none" stroke="#ffffff" stroke-width="1.45"/><circle cx="8" cy="5.600" r="1.300" fill="#ffffff"/><path d="M4.800 2.400a4.600 4.600 0 0 0 0 6.400M11.200 2.400a4.600 4.600 0 0 1 0 6.400M2.600 0.600a7.400 7.400 0 0 0 0 10M13.400 0.600a7.400 7.400 0 0 1 0 10" fill="none" stroke="#ffffff" stroke-width="1.100"/></svg>
<div class="st" style="left:191.4px"><span class="m" id="sb4" style="transform:scaleX(1.0000);position:static;line-height:20px">0</span></div>
<div class="st" style="left:671px"><span class="m" id="sb5" style="transform:scaleX(0.9554);position:static;line-height:20px">行 63，列 1</span></div>
<div class="st" style="left:741.5px"><span class="m" id="sb6" style="transform:scaleX(0.9671);position:static;line-height:20px">空格: 4</span></div>
<div class="st" style="left:789px"><span class="m" id="sb7" style="transform:scaleX(0.9183);position:static;line-height:20px">UTF-8</span></div>
<div class="st" style="left:832px"><span class="m" id="sb8" style="transform:scaleX(0.7932);position:static;line-height:20px">CRLF</span></div>
<div class="st" style="left:865.3px"><span class="m" id="sb9" style="transform:scaleX(0.9231);position:static;line-height:20px">HTML</span></div>
<svg style="left:907.30px;top:640.00px;overflow:visible" width="11.50" height="11.50" viewBox="0 0 16 16" ><path d="M3.200 11.800V7a4.800 4.800 0 0 1 9.600 0v4.800l1.400 1.400H1.800z" fill="none" stroke="#ffffff" stroke-width="1.45" stroke-linejoin="round"/><path d="M6.400 14.200a1.700 1.700 0 0 0 3.200 0" fill="none" stroke="#ffffff" stroke-width="1.45"/></svg>
</body></html>
